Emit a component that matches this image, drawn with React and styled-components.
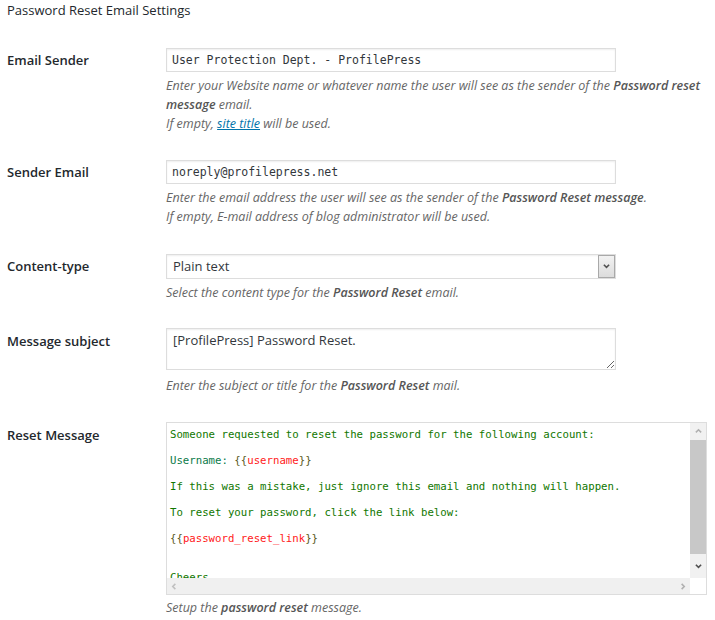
import React from "react";
import styled, { createGlobalStyle } from "styled-components";

const Global = createGlobalStyle`
  html, body { margin: 0; padding: 0; background: #fff; }
  body {
    font-family: "Open Sans", "Noto Sans", sans-serif;
    color: #23282d;
    -webkit-font-smoothing: antialiased;
  }
  * { box-sizing: border-box; }
`;

const Page = styled.div`
  width: 715px;
  padding: 0 7px;
  display: flex;
  flex-direction: column;
`;

const Heading = styled.h2`
  margin: 0;
  font-size: 13px;
  font-weight: 400;
  line-height: 20px;
  color: #23282d;
`;

const Form = styled.div`
  margin-top: 28px;
  display: flex;
  flex-direction: column;
  gap: ${(p) => p.$gap}px;
`;

const Row = styled.div`
  display: grid;
  grid-template-columns: 159px 1fr;
  margin-top: ${(p) => p.$mt || 0}px;
`;

const Label = styled.div`
  font-size: 13px;
  font-weight: 600;
  line-height: 24px;
  color: #23282d;
  padding-top: ${(p) => p.$pt || 0}px;
`;

const Field = styled.div`
  display: flex;
  flex-direction: column;
  align-items: flex-start;
`;

const TextInput = styled.input`
  width: 450px;
  height: 24px;
  border: 1px solid #ddd;
  box-shadow: inset 0 1px 2px rgba(0, 0, 0, 0.07);
  padding: 0 5px;
  font-family: "DejaVu Sans Mono", "Liberation Mono", monospace;
  font-size: 11.5px;
  color: #32373c;
  background: #fff;
  outline: none;
  margin: 0;
`;

const SelectBox = styled.div`
  width: 450px;
  height: 25px;
  border: 1px solid #ddd;
  display: flex;
  align-items: stretch;
  background: #fff;
  box-shadow: inset 0 1px 2px rgba(0, 0, 0, 0.07);
`;

const SelectText = styled.div`
  flex: 1;
  font-size: 13px;
  line-height: 23px;
  padding-left: 6px;
  color: #32373c;
`;

const SelectArrow = styled.div`
  width: 17px;
  border: 1px solid #a9a9a9;
  background: linear-gradient(#f2f2f2, #dcdcdc);
  display: flex;
  align-items: center;
  justify-content: center;
`;

const Area = styled.textarea`
  width: 450px;
  height: 42px;
  border: 1px solid #ddd;
  box-shadow: inset 0 1px 2px rgba(0, 0, 0, 0.07);
  padding: 2px 6px;
  font-family: "Open Sans", sans-serif;
  font-size: 13px;
  line-height: 19px;
  color: #32373c;
  resize: vertical;
  outline: none;
  display: block;
  margin: 0;
`;

const Desc = styled.p`
  margin: ${(p) => p.$mt}px 0 0;
  font-size: 12.5px;
  font-style: italic;
  line-height: 19px;
  color: #666;
  b {
    font-weight: 600;
    color: #555;
  }
  a {
    color: #0073aa;
    text-decoration: underline;
  }
`;

const Editor = styled.div`
  width: 541px;
  height: 173px;
  border: 1px solid #ddd;
  display: grid;
  grid-template-columns: 1fr 16px;
  grid-template-rows: 1fr 16px;
  background: #fff;
`;

const Code = styled.div`
  overflow: hidden;
  padding: 5px 3px 0 3px;
  font-family: "DejaVu Sans Mono", "Liberation Mono", monospace;
  font-size: 10.7px;
  line-height: 13px;
  white-space: pre;
  color: #117700;
`;

const CodeLine = styled.div`
  height: 13px;
`;

const Tok = styled.span`
  color: ${(p) =>
    p.$k === "var" ? "#ff1a1a" : p.$k === "brace" ? "#5a5a22" : p.$k === "key" ? "#0b7a4a" : "#117700"};
`;

const VScroll = styled.div`
  background: #f1f1f1;
  display: flex;
  flex-direction: column;
  align-items: stretch;
`;

const ScrollBtn = styled.div`
  height: ${(p) => p.$h}px;
  display: flex;
  align-items: center;
  justify-content: center;
  flex: none;
`;

const Thumb = styled.div`
  height: 114px;
  background: #c8c8c8;
  flex: none;
`;

const HScroll = styled.div`
  background: #f0f0f0;
  display: flex;
  justify-content: space-between;
  align-items: center;
  padding: 0 4px;
`;

const Corner = styled.div`
  background: #fff;
`;

const Chevron = ({ dir = "down", color = "#505050", size = 7 }) => {
  const paths = {
    down: "M1 2 L4 5 L7 2",
    up: "M1 5 L4 2 L7 5",
    left: "M5 1 L2 4 L5 7",
    right: "M3 1 L6 4 L3 7",
  };
  return (
    <svg width={size} height={size} viewBox="0 0 8 8">
      <path d={paths[dir]} fill="none" stroke={color} strokeWidth="1.8" />
    </svg>
  );
};

const codeLines = [
  [["t", "Someone requested to reset the password for the following account:"]],
  [],
  [
    ["key", "Username: "],
    ["brace", "{{"],
    ["var", "username"],
    ["brace", "}}"],
  ],
  [],
  [["t", "If this was a mistake, just ignore this email and nothing will happen."]],
  [],
  [["t", "To reset your password, click the link below:"]],
  [],
  [
    ["brace", "{{"],
    ["var", "password_reset_link"],
    ["brace", "}}"],
  ],
  [],
  [],
  [["t", "Cheers"]],
];

export default function App() {
  return (
    <>
      <Global />
      <Page>
        <Heading>Password Reset Email Settings</Heading>
        <Form $gap={27}>
          <Row>
            <Label>Email Sender</Label>
            <Field>
              <TextInput readOnly defaultValue="User Protection Dept. - ProfilePress" />
              <Desc $mt={4}>
                Enter your Website name or whatever name the user will see as the sender of the{" "}
                <b>Password reset message</b> email.
                <br />
                If empty, <a href="#">site title</a> will be used.
              </Desc>
            </Field>
          </Row>
          <Row>
            <Label>Sender Email</Label>
            <Field>
              <TextInput readOnly defaultValue="noreply@profilepress.net" />
              <Desc $mt={4}>
                Enter the email address the user will see as the sender of the{" "}
                <b>Password Reset message</b>.
                <br />
                If empty, E-mail address of blog administrator will be used.
              </Desc>
            </Field>
          </Row>
          <Row $mt={1}>
            <Label>Content-type</Label>
            <Field>
              <SelectBox>
                <SelectText>Plain text</SelectText>
                <SelectArrow>
                  <Chevron dir="down" />
                </SelectArrow>
              </SelectBox>
              <Desc $mt={4}>
                Select the content type for the <b>Password Reset</b> email.
              </Desc>
            </Field>
          </Row>
          <Row $mt={-1}>
            <Label $pt={1}>Message subject</Label>
            <Field>
              <Area readOnly defaultValue="[ProfilePress] Password Reset." />
              <Desc $mt={6}>
                Enter the subject or title for the <b>Password Reset</b> mail.
              </Desc>
            </Field>
          </Row>
          <Row>
            <Label $pt={1}>Reset Message</Label>
            <Field>
              <Editor>
                <Code>
                  {codeLines.map((line, i) => (
                    <CodeLine key={i}>
                      {line.map(([k, s], j) => (
                        <Tok key={j} $k={k}>
                          {s}
                        </Tok>
                      ))}
                    </CodeLine>
                  ))}
                </Code>
                <VScroll>
                  <ScrollBtn $h={17}>
                    <Chevron dir="up" color="#b0b0b0" />
                  </ScrollBtn>
                  <Thumb />
                  <ScrollBtn $h={24}>
                    <Chevron dir="down" color="#505050" />
                  </ScrollBtn>
                </VScroll>
                <HScroll>
                  <Chevron dir="left" color="#c0c0c0" />
                  <Chevron dir="right" color="#b0b0b0" />
                </HScroll>
                <Corner />
              </Editor>
              <Desc $mt={3}>
                Setup the <b>password reset</b> message.
              </Desc>
            </Field>
          </Row>
        </Form>
      </Page>
    </>
  );
}
